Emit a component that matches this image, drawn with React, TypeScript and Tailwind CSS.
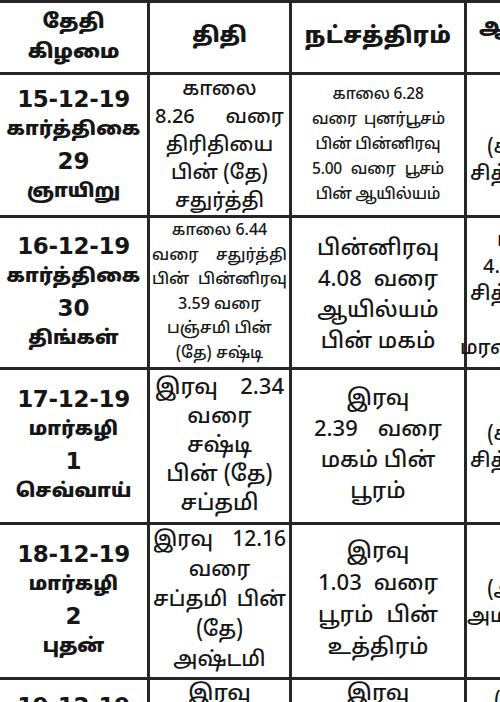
const tamil = "font-['Noto_Sans_Tamil','Lohit_Tamil',sans-serif]";

// a line that starts with "j:" is spread edge to edge, like justified print
type Row = {
  date: string[];
  thithi: string[];
  star: string[];
  extra: [string, string][];
  h: string;
  tSize: string;
  sSize: string;
};

const rows: Row[] = [
  {
    date: ["15-12-19", "கார்த்திகை", "29", "ஞாயிறு"],
    thithi: ["காலை", "j:8.26 வரை", "திரிதியை", "பின் (தே)", "சதுர்த்தி"],
    star: ["காலை 6.28", "j:வரை புனர்பூசம்", "பின் பின்னிரவு", "j:5.00 வரை பூசம்", "பின் ஆயில்யம்"],
    extra: [["", ""], ["", ""], ["(சித்த", "ml-[17px]"], ["சித்த", ""], ["", ""]],
    h: "h-[143px]",
    tSize: "text-[20px] leading-[28px] px-[5px]",
    sSize: "text-[15.5px] leading-[25px] px-[20px] tracking-[-0.2px]",
  },
  {
    date: ["16-12-19", "கார்த்திகை", "30", "திங்கள்"],
    thithi: ["காலை 6.44", "j:வரை சதுர்த்தி", "j:பின் பின்னிரவு", "3.59 வரை", "பஞ்சமி பின்", "(தே) சஷ்டி"],
    star: ["பின்னிரவு", "j:4.08 வரை", "ஆயில்யம்", "பின் மகம்"],
    extra: [["பின்", "ml-[27px]"], ["4.08", "ml-[13px]"], ["சித்த", ""], ["", ""], ["மரண", "ml-[-10px]"]],
    h: "h-[152px]",
    tSize: "text-[16px] leading-[24.5px] px-[2px]",
    sSize: "text-[22px] leading-[31px] px-[26px] pt-[6px]",
  },
  {
    date: ["17-12-19", "மார்கழி", "1", "செவ்வாய்"],
    thithi: ["j:இரவு 2.34", "வரை", "சஷ்டி", "பின் (தே)", "சப்தமி"],
    star: ["இரவு", "j:2.39 வரை", "மகம் பின்", "பூரம்"],
    extra: [["", ""], ["(சித்த", "ml-[17px]"], ["சித்த", ""], ["", ""]],
    h: "h-[155px]",
    tSize: "text-[22px] leading-[29px] px-[5px]",
    sSize: "text-[22px] leading-[31px] px-[22px]",
  },
  {
    date: ["18-12-19", "மார்கழி", "2", "புதன்"],
    thithi: ["j:இரவு 12.16", "வரை", "j:சப்தமி பின்", "(தே)", "அஷ்டமி"],
    star: ["இரவு", "j:1.03 வரை", "j:பூரம் பின்", "உத்திரம்"],
    extra: [["", ""], ["(அமிர்த", "ml-[17px]"], ["அமிர்த", "ml-[-3px]"], ["", ""]],
    h: "h-[155px]",
    tSize: "text-[21px] leading-[30px] px-[3px]",
    sSize: "text-[22px] leading-[32px] px-[26px]",
  },
  {
    date: ["19-12-19", "மார்கழி", "3", "வியாழன்"],
    thithi: ["இரவு", "10.05 வரை", "அஷ்டமி பின்", "(தே)", "நவமி"],
    star: ["இரவு", "11.30 வரை", "உத்திரம்", "பின் அஸ்தம்", "அஸ்தம்"],
    extra: [["(சித்த", "ml-[24px]"], ["சித்த", ""], ["", ""], ["", ""], ["", ""]],
    h: "h-[140px]",
    tSize: "text-[22px] leading-[29px] px-[5px]",
    sSize: "text-[22px] leading-[29px] px-[22px]",
  },
];

function Lines({ items }: { items: string[] }) {
  return (
    <>
      {items.map((t, i) =>
        t.startsWith("j:") ? (
          <div key={i} className="flex justify-between gap-x-[7px] w-full whitespace-nowrap">
            {t
              .slice(2)
              .split(" ")
              .map((w, k) => (
                <span key={k}>{w}</span>
              ))}
          </div>
        ) : (
          <div key={i} className="whitespace-nowrap">
            {t}
          </div>
        )
      )}
    </>
  );
}

export default function App() {
  return (
    <div className={`w-[500px] h-[702px] overflow-hidden bg-white text-[#161616] ${tamil}`}>
      <div className="w-[620px] border-t-[3px] border-[#262626]">
        {/* header */}
        <div className="grid grid-cols-[150px_142px_175px_153px] h-[72px] border-b-[3px] border-[#262626] font-black">
          <div className="border-r-[3px] border-[#262626] flex flex-col items-center justify-center text-[20px] leading-[30px]">
            <div>தேதி</div>
            <div>கிழமை</div>
          </div>
          <div className="border-r-[3px] border-[#262626] flex items-center justify-center text-[21px]">திதி</div>
          <div className="border-r-[3px] border-[#262626] flex items-center justify-center text-[22px] tracking-[0.5px]">
            நட்சத்திரம்
          </div>
          <div className="flex items-start pt-[10px] pl-[12px] text-[21px]">ஆங்கிலம்</div>
        </div>

        {rows.map((r, i) => (
          <div
            key={i}
            className={`grid grid-cols-[150px_142px_175px_153px] ${r.h} border-b-[3px] border-[#262626] font-medium`}
          >
            <div className="border-r-[3px] border-[#262626] flex flex-col items-center justify-center font-black text-[19px] leading-[31px]">
              <div className="font-['DejaVu_Sans',sans-serif] text-[23px] font-bold tracking-[-0.3px]">{r.date[0]}</div>
              <div className="tracking-[0.3px]">{r.date[1]}</div>
              <div className="font-['DejaVu_Sans',sans-serif] text-[23px] font-bold">{r.date[2]}</div>
              <div>{r.date[3]}</div>
            </div>
            <div className={`border-r-[3px] border-[#262626] flex flex-col items-center justify-center text-center ${r.tSize}`}>
              <Lines items={r.thithi} />
            </div>
            <div className={`border-r-[3px] border-[#262626] flex flex-col items-center justify-center text-center ${r.sSize}`}>
              <Lines items={r.star} />
            </div>
            <div className="flex flex-col justify-center pl-[3px] pt-[6px] text-[20px] leading-[27px]">
              {r.extra.map(([t, c], k) => (
                <div key={k} className={`whitespace-nowrap h-[27px] ${c}`}>
                  {t}
                </div>
              ))}
            </div>
          </div>
        ))}
      </div>
    </div>
  );
}
